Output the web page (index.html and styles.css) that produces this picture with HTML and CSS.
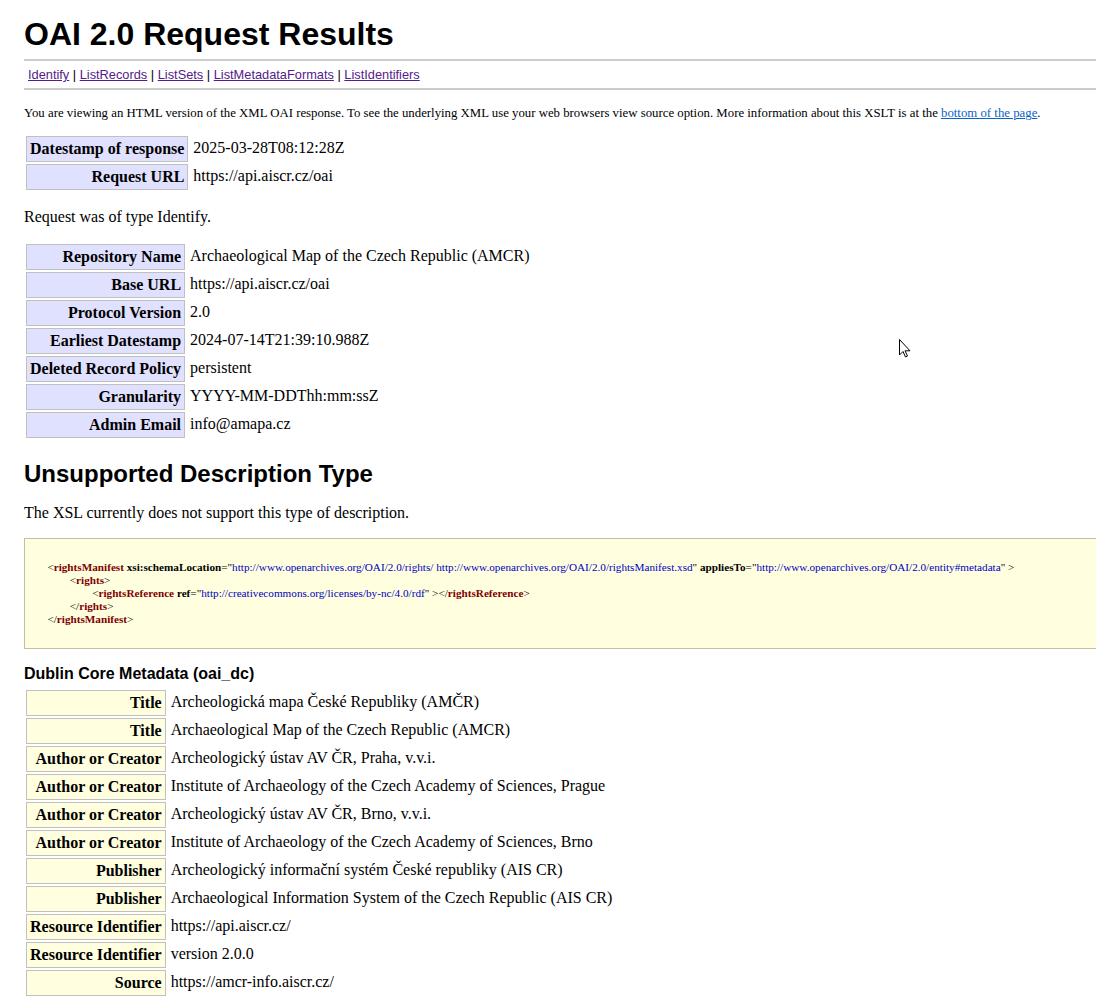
FILE: index.html
```html
<!DOCTYPE html>
<html>
<head>
<meta charset="utf-8">
<title>OAI 2.0 Request Results</title>
<link rel="stylesheet" href="styles.css">
</head>
<body>
<h1>OAI 2.0 Request Results</h1>
<ul class="quicklinks">
  <li><a class="visited" href="#">Identify</a> | </li>
  <li><a class="visited" href="#">ListRecords</a> | </li>
  <li><a class="visited" href="#">ListSets</a> | </li>
  <li><a class="visited" href="#">ListMetadataFormats</a> | </li>
  <li><a class="visited" href="#">ListIdentifiers</a></li>
</ul>
<p class="intro">You are viewing an HTML version of the XML OAI response. To see the underlying XML use your web browsers view source option. More information about this XSLT is at the <a class="fresh" href="#moreinfo">bottom of the page</a>.</p>
<table class="values">
  <tr><td class="key">Datestamp of response</td><td class="value">2025-03-28T08:12:28Z</td></tr>
  <tr><td class="key">Request URL</td><td class="value">https://api.aiscr.cz/oai</td></tr>
</table>
<p class="reqtype">Request was of type Identify.</p>
<div class="results">
  <table class="values">
    <tr><td class="key">Repository Name</td><td class="value">Archaeological Map of the Czech Republic (AMCR)</td></tr>
    <tr><td class="key">Base URL</td><td class="value">https://api.aiscr.cz/oai</td></tr>
    <tr><td class="key">Protocol Version</td><td class="value">2.0</td></tr>
    <tr><td class="key">Earliest Datestamp</td><td class="value">2024-07-14T21:39:10.988Z</td></tr>
    <tr><td class="key">Deleted Record Policy</td><td class="value">persistent</td></tr>
    <tr><td class="key">Granularity</td><td class="value">YYYY-MM-DDThh:mm:ssZ</td></tr>
    <tr><td class="key">Admin Email</td><td class="value">info@amapa.cz</td></tr>
  </table>
  <h2>Unsupported Description Type</h2>
  <p class="unsupported">The XSL currently does not support this type of description.</p>
  <div class="xmlSource">
    <div class="xmlBlock">&lt;<span class="xmlTagName">rightsManifest</span> <span class="xmlAttrName">xsi:schemaLocation</span>="<span class="xmlAttrValue">http://www.openarchives.org/OAI/2.0/rights/ http://www.openarchives.org/OAI/2.0/rightsManifest.xsd</span>" <span class="xmlAttrName">appliesTo</span>="<span class="xmlAttrValue">http://www.openarchives.org/OAI/2.0/entity#metadata</span>" &gt;
      <div class="xmlBlock">&lt;<span class="xmlTagName">rights</span>&gt;
        <div class="xmlBlock">&lt;<span class="xmlTagName">rightsReference</span> <span class="xmlAttrName">ref</span>="<span class="xmlAttrValue">http://creativecommons.org/licenses/by-nc/4.0/rdf</span>" &gt;&lt;/<span class="xmlTagName">rightsReference</span>&gt;</div>
      &lt;/<span class="xmlTagName">rights</span>&gt;</div>
    &lt;/<span class="xmlTagName">rightsManifest</span>&gt;</div>
  </div>
  <h3>Dublin Core Metadata (oai_dc)</h3>
  <div class="dcdata">
    <table class="values">
      <tr><td class="key">Title</td><td class="value">Archeologická mapa České Republiky (AMČR)</td></tr>
      <tr><td class="key">Title</td><td class="value">Archaeological Map of the Czech Republic (AMCR)</td></tr>
      <tr><td class="key">Author or Creator</td><td class="value">Archeologický ústav AV ČR, Praha, v.v.i.</td></tr>
      <tr><td class="key">Author or Creator</td><td class="value">Institute of Archaeology of the Czech Academy of Sciences, Prague</td></tr>
      <tr><td class="key">Author or Creator</td><td class="value">Archeologický ústav AV ČR, Brno, v.v.i.</td></tr>
      <tr><td class="key">Author or Creator</td><td class="value">Institute of Archaeology of the Czech Academy of Sciences, Brno</td></tr>
      <tr><td class="key">Publisher</td><td class="value">Archeologický informační systém České republiky (AIS CR)</td></tr>
      <tr><td class="key">Publisher</td><td class="value">Archaeological Information System of the Czech Republic (AIS CR)</td></tr>
      <tr><td class="key">Resource Identifier</td><td class="value">https://api.aiscr.cz/</td></tr>
      <tr><td class="key">Resource Identifier</td><td class="value">version 2.0.0</td></tr>
      <tr><td class="key">Source</td><td class="value">https://amcr-info.aiscr.cz/</td></tr>
    </table>
  </div>
</div>
<svg class="cursor" width="12" height="19" viewBox="0 0 12 19"><path d="M0.5 0.5 L0.5 16 L4 12.5 L6.5 18 L8.5 17 L6 11.8 L11 11.8 Z" fill="#fff" stroke="#000" stroke-width="1" stroke-linejoin="miter"/></svg>
</body>
</html>
```
FILE: styles.css
```css
html, body {
  background: #fff;
}
body {
  margin: 16px 0 16px 24px;
  font-family: "Liberation Serif", "Times New Roman", serif;
  font-size: 16px;
  color: #000;
  position: relative;
  overflow-x: hidden;
}
h1, h2, h3 {
  font-family: "Liberation Sans", Arial, sans-serif;
  font-weight: bold;
}
h1 {
  font-size: 32px;
  margin: 0;
  padding-bottom: 4px;
  line-height: 37px;
}
h2 {
  font-size: 24px;
  margin: 20px 0 12px;
  line-height: 28px;
}
h3 {
  font-size: 16px;
  margin: 16px 0 5px;
  line-height: 18px;
}
ul.quicklinks {
  margin: 2px 0 16px;
  padding: 4px;
  border-top: 2px solid #ccc;
  border-bottom: 2px solid #ccc;
  list-style: none;
  line-height: 18px;
}
ul.quicklinks li {
  display: inline;
  font-size: 12.8px;
  font-family: "Liberation Sans", Arial, sans-serif;
}
a.visited {
  color: #551a8b;
}
a.fresh {
  color: #0b63c7;
}
p {
  margin: 16px 0;
  line-height: 18px;
}
p.intro {
  font-size: 12.8px;
  line-height: 15px;
  margin: 16px 0 13px;
}
table.values {
  border-collapse: separate;
  border-spacing: 2px;
}
td {
  line-height: 18px;
}
td.key {
  background-color: #e0e0ff;
  padding: 3px;
  text-align: right;
  border: 1px solid #c0c0c0;
  white-space: nowrap;
  font-weight: bold;
  vertical-align: top;
}
td.value {
  vertical-align: top;
  padding: 3px;
  white-space: nowrap;
}
.dcdata td.key {
  background-color: #ffffe0;
}
.xmlSource {
  font-size: 11.2px;
  line-height: 13px;
  border: 1px solid #c0c0a0;
  background-color: #ffffe0;
  padding: 22px 22px 22px 0;
  margin-right: -40px;
  white-space: nowrap;
}
.xmlBlock {
  padding-left: 22.4px;
}
.xmlTagName {
  color: #800000;
  font-weight: bold;
}
.xmlAttrName {
  font-weight: bold;
}
.xmlAttrValue {
  color: #0000c0;
}
.cursor {
  position: absolute;
  left: 875px;
  top: 323px;
}
```
